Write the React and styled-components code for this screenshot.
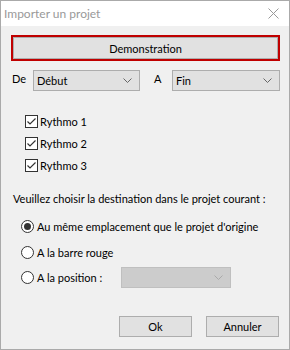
import React from 'react';
import styled, { createGlobalStyle } from 'styled-components';

const GlobalStyle = createGlobalStyle`
  html, body {
    margin: 0;
    padding: 0;
    background: #f0f0f0;
  }
  body {
    font-family: Lato, "Liberation Sans", sans-serif;
    font-size: 11px;
    color: #000;
  }
`;

const Window = styled.div`
  box-sizing: border-box;
  width: 290px;
  height: 350px;
  border: 1px solid #aaaaaa;
  background: #f0f0f0;
  display: flex;
  flex-direction: column;
  white-space: nowrap;
`;

const TitleBar = styled.div`
  height: 25px;
  background: #fff;
  display: flex;
  align-items: center;
  justify-content: space-between;
  padding: 0 10px 0 3px;
  color: #999;
  font-size: 12px;
`;

const Content = styled.div`
  flex: 1;
  display: flex;
  flex-direction: column;
  padding: 9px 9px 0 10px;
`;

const DemoButton = styled.div`
  height: 26px;
  box-sizing: border-box;
  border: 2px solid #c00000;
  box-shadow: inset 0 0 0 1px #adadad;
  background: #e1e1e1;
  display: flex;
  align-items: center;
  justify-content: center;
`;

const SelectRow = styled.div`
  display: flex;
  align-items: center;
  margin-top: 9px;
  padding-left: 1px;
`;

const Label = styled.span`
  width: ${p => p.w}px;
  align-self: flex-start;
  padding-top: 2px;
  padding-left: ${p => p.pl || 0}px;
  box-sizing: border-box;
`;

const Select = styled.div`
  box-sizing: border-box;
  width: ${p => p.w}px;
  height: 21px;
  border: 1px solid ${p => (p.disabled ? '#bfbfbf' : '#adadad')};
  background: ${p => (p.disabled ? '#cccccc' : '#e1e1e1')};
  display: flex;
  align-items: center;
  justify-content: space-between;
  padding: 0 7px 0 3px;
  color: #000;
`;

const CheckList = styled.div`
  display: flex;
  flex-direction: column;
  gap: 9px;
  margin-top: 24px;
  padding-left: 14px;
`;

const Row = styled.div`
  display: flex;
  align-items: center;
  height: 13px;
  gap: 2px;
`;

const Box = styled.div`
  box-sizing: border-box;
  width: 13px;
  height: 13px;
  border: 1px solid #333;
  background: #fff;
  display: flex;
  align-items: center;
  justify-content: center;
`;

const Prompt = styled.div`
  margin-top: 20px;
  padding-left: 2px;
`;

const RadioList = styled.div`
  display: flex;
  flex-direction: column;
  margin-top: 15px;
  padding-left: 10px;
  gap: 12.5px;
`;

const RadioRow = styled.div`
  display: flex;
  align-items: center;
  height: 13px;
  gap: 3px;
`;

const Circle = styled.div`
  box-sizing: border-box;
  width: 13px;
  height: 13px;
  border-radius: 50%;
  border: 1px solid #333;
  background: #fff;
  display: flex;
  align-items: center;
  justify-content: center;
  &::after {
    content: '';
    display: ${p => (p.on ? 'block' : 'none')};
    width: 7px;
    height: 7px;
    border-radius: 50%;
    background: #333;
  }
`;

const PosLabel = styled.span`
  width: 81px;
`;

const Footer = styled.div`
  display: flex;
  justify-content: flex-end;
  gap: 14px;
  margin-top: auto;
  margin-bottom: 12px;
  padding-right: 1px;
`;

const Button = styled.div`
  box-sizing: border-box;
  width: 73px;
  height: 21px;
  border: 1px solid #adadad;
  background: #e1e1e1;
  display: flex;
  align-items: center;
  justify-content: center;
`;

const Chevron = ({ color = '#666' }) => (
  <svg width="9" height="5" viewBox="0 0 9 5">
    <path d="M0.5 0.5 L4.5 4.5 L8.5 0.5" fill="none" stroke={color} strokeWidth="1" />
  </svg>
);

const Check = () => (
  <svg width="11" height="11" viewBox="0 0 11 11">
    <path d="M1.5 5.5 L4 8 L9.5 2.5" fill="none" stroke="#333" strokeWidth="1.2" />
  </svg>
);

const CloseIcon = () => (
  <svg width="11" height="11" viewBox="0 0 11 11">
    <path d="M0.5 0.5 L10.5 10.5 M10.5 0.5 L0.5 10.5" stroke="#999" strokeWidth="1" />
  </svg>
);

const rythmos = ['Rythmo 1', 'Rythmo 2', 'Rythmo 3'];

export default function App() {
  return (
    <Window>
      <GlobalStyle />
      <TitleBar>
        <span>Importer un projet</span>
        <CloseIcon />
      </TitleBar>
      <Content>
        <DemoButton>Demonstration</DemoButton>
        <SelectRow>
          <Label w={21}>De</Label>
          <Select w={107}>
            <span>Début</span>
            <Chevron />
          </Select>
          <Label w={32} pl={14}>A</Label>
          <Select w={108}>
            <span>Fin</span>
            <Chevron />
          </Select>
        </SelectRow>
        <CheckList>
          {rythmos.map(r => (
            <Row key={r}>
              <Box><Check /></Box>
              <span>{r}</span>
            </Row>
          ))}
        </CheckList>
        <Prompt>Veuillez choisir la destination dans le projet courant :</Prompt>
        <RadioList>
          <RadioRow>
            <Circle on />
            <span>Au même emplacement que le projet d'origine</span>
          </RadioRow>
          <RadioRow>
            <Circle />
            <span>A la barre rouge</span>
          </RadioRow>
          <RadioRow>
            <Circle />
            <PosLabel>A la position :</PosLabel>
            <Select w={110} disabled>
              <span />
              <Chevron color="#aaa" />
            </Select>
          </RadioRow>
        </RadioList>
        <Footer>
          <Button>Ok</Button>
          <Button>Annuler</Button>
        </Footer>
      </Content>
    </Window>
  );
}
